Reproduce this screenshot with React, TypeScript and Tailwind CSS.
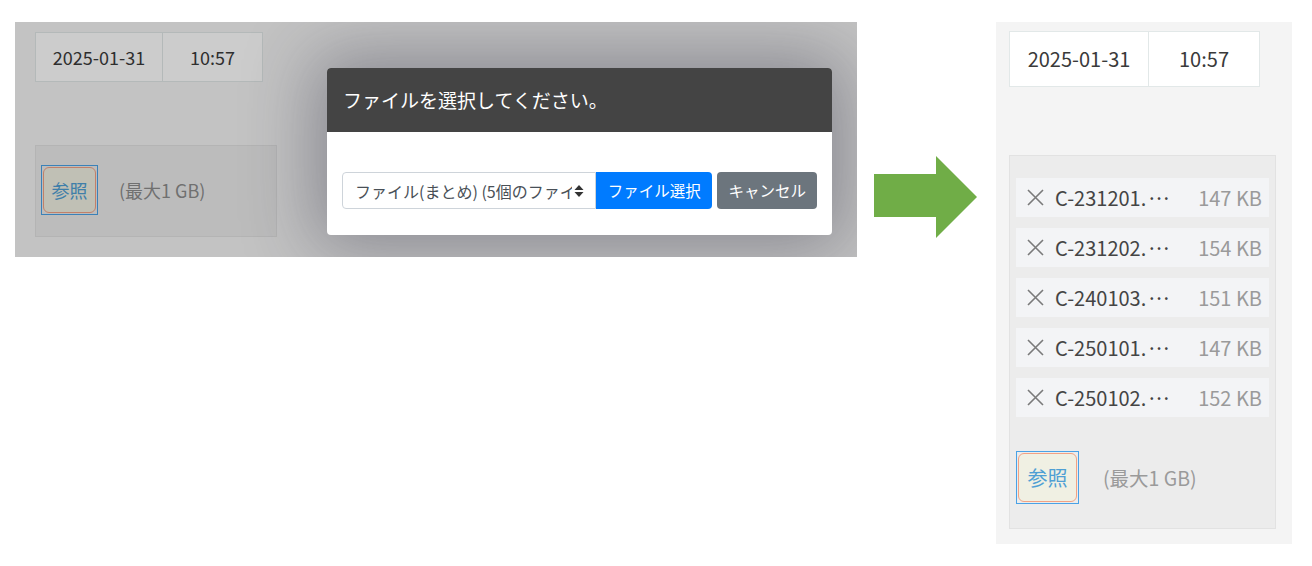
import React from 'react';

const FONT = { fontFamily: '"Noto Sans CJK JP", "Noto Sans", sans-serif' };

const files = [
  { name: 'C-231201.', size: '147 KB' },
  { name: 'C-231202.', size: '154 KB' },
  { name: 'C-240103.', size: '151 KB' },
  { name: 'C-250101.', size: '147 KB' },
  { name: 'C-250102.', size: '152 KB' },
];

const BrowseButton = ({ big }: { big?: boolean }) => (
  <div className={`border border-[#4aa2e6] p-[1px] ${big ? 'w-[63px] h-[53px]' : 'w-[57px] h-[50px]'}`}>
    <div
      className={`w-full h-full rounded-[6px] border border-[#f2a184] bg-[#f0f0e3] flex items-center justify-center text-[#4f9fd4] ${
        big ? 'text-[20px]' : 'text-[18px]'
      }`}
    >
      参照
    </div>
  </div>
);

const DateTime = ({ big }: { big?: boolean }) => (
  <div className="flex">
    <div
      className={`bg-white border border-[#e2e8e8] flex items-center justify-center text-[#3a3a3a] ${
        big ? 'w-[140px] h-[56px] text-[20px]' : 'w-[128px] h-[50px] text-[18px]'
      }`}
    >
      2025-01-31
    </div>
    <div
      className={`bg-white border border-l-0 border-[#e2e8e8] flex items-center justify-center text-[#3a3a3a] ${
        big ? 'w-[111px] h-[56px] text-[20px]' : 'w-[100px] h-[50px] text-[18px]'
      }`}
    >
      10:57
    </div>
  </div>
);

const Chevrons = () => (
  <svg width="10" height="14" viewBox="0 0 10 14" className="shrink-0">
    <path d="M5 1 L9.5 6 H0.5 Z" fill="#333" />
    <path d="M5 13 L9.5 8 H0.5 Z" fill="#333" />
  </svg>
);

// thin remove cross in each file row
const Cross = () => (
  <svg width="17" height="17" viewBox="0 0 17 17" className="shrink-0">
    <path d="M1 1 L16 16 M16 1 L1 16" stroke="#7a7a7a" strokeWidth="1.6" fill="none" />
  </svg>
);

export default function App() {
  return (
    <div className="w-[1312px] h-[566px] bg-white flex items-start pl-[15px] pt-[22px]" style={FONT}>
      {/* before: upload dialog open */}
      <div className="relative w-[842px] h-[235px] bg-[#f4f4f4] overflow-hidden">
        <div className="pt-[10px] pl-[20px]">
          <DateTime />
          <div className="mt-[63px] w-[242px] h-[92px] bg-[#ececec] border border-[#e2e2e2] flex items-center pl-[5px] pb-[2px]">
            <BrowseButton />
            <span className="ml-[21px] text-[18px] text-[#8c8c8c]">(最大1 GB)</span>
          </div>
        </div>

        <div className="absolute inset-0 bg-black/20" />

        <div className="absolute left-[312px] top-[46px] w-[505px] h-[167px] bg-white rounded-[4px] shadow-[0_0_70px_12px_rgba(40,40,60,0.38)] overflow-hidden">
          <div className="h-[64px] bg-[#444444] flex items-center pl-[16px] text-white text-[19px]">
            ファイルを選択してください。
          </div>
          <div className="flex items-center px-[15px] pt-[40px]">
            <div className="w-[254px] h-[37px] border border-[#ced4da] rounded-l-[4px] flex items-center pl-[12px] pr-[11px] gap-[2px] text-[16px] text-[#495057]">
              <span className="flex-1 overflow-hidden whitespace-nowrap">ファイル(まとめ) (5個のファイル)</span>
              <Chevrons />
            </div>
            <div className="w-[117px] h-[37px] bg-[#007bff] rounded-r-[4px] flex items-center justify-center text-white text-[15.5px]">
              ファイル選択
            </div>
            <div className="ml-[5px] w-[100px] h-[37px] bg-[#6c757d] rounded-[4px] flex items-center justify-center text-white text-[15.5px]">
              キャンセル
            </div>
          </div>
        </div>
      </div>

      {/* arrow */}
      <svg width="103" height="82" viewBox="0 0 103 82" className="ml-[17px] mt-[134px] shrink-0">
        <polygon points="0,18 62,18 62,0 103,41 62,82 62,61 0,61" fill="#70ad47" />
      </svg>

      {/* after: files listed */}
      <div className="ml-[19px] w-[296px] h-[522px] bg-[#f4f4f4] pl-[13px] pt-[9px]">
        <DateTime big />
        <div className="mt-[68px] w-[267px] h-[374px] bg-[#ececec] border border-[#e2e2e2] px-[6px] pt-[22px]">
          <div className="flex flex-col gap-[11px]">
            {files.map((f) => (
              <div key={f.name} className="h-[39px] bg-[#f3f4f6] flex items-center pl-[11px] pr-[7px]">
                <Cross />
                <span className="ml-[11px] text-[20px] text-[#444]">
                  {f.name}
                  <span className="tracking-[-4px]">···</span>
                </span>
                <span className="ml-auto text-[20px] text-[#9a9a9a]">{f.size}</span>
              </div>
            ))}
          </div>
          <div className="mt-[34px] flex items-center">
            <BrowseButton big />
            <span className="ml-[24px] text-[19.5px] text-[#9a9a9a]">(最大1 GB)</span>
          </div>
        </div>
      </div>
    </div>
  );
}
